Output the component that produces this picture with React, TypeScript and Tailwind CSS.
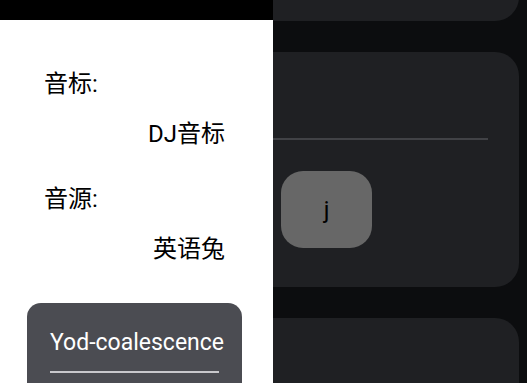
const Row = ({ label, value }: { label: string; value: string }) => {
  return (
    <div className="flex flex-col">
      <div className="h-[32px] leading-[32px]">{label}</div>
      <div className="mt-[18px] h-[32px] text-right leading-[32px]">{value}</div>
    </div>
  );
};

const Drawer = () => {
  return (
    <div className="absolute inset-y-0 left-0 flex w-[273px] flex-col overflow-hidden bg-white">
      <div className="h-[20px] shrink-0 bg-black" />
      <div className="flex shrink-0 flex-col gap-[33px] pt-[48px] pr-[48px] pl-[44px] text-[24px] text-black">
        <Row label="音标:" value="DJ音标" />
        <Row label="音源:" value="英语兔" />
      </div>
      <div className="mt-[38px] ml-[27px] h-[120px] w-[215px] shrink-0 rounded-[14px] bg-[#4b4c52] px-[23px] pt-[24px]">
        <div className="font-['Roboto'] text-[23px] leading-[32px] whitespace-nowrap text-white">Yod-coalescence</div>
        <div className="mt-[12px] h-[1.5px] w-[169px] bg-[#c8c8cc]" />
      </div>
    </div>
  );
};

const Cards = () => {
  return (
    <div className="flex flex-col gap-[31px] pr-[8px] pl-[8px]">
      <div className="-mt-[79px] h-[100px] shrink-0 rounded-[24px] bg-[#1f2023]" />
      <div className="flex h-[235px] shrink-0 flex-col rounded-[24px] bg-[#1f2023]">
        <div className="mt-[86px] mr-[31px] h-[2px] bg-[#414246]" />
        <div className="mt-[31px] ml-[273px] flex h-[77px] w-[91px] items-center justify-center rounded-[22px] bg-[#676767] text-[24px] text-black">
          j
        </div>
      </div>
      <div className="h-[120px] shrink-0 rounded-[24px] bg-[#1f2023]" />
    </div>
  );
};

export default function App() {
  return (
    <div className="relative h-[383px] w-[527px] overflow-hidden bg-[#0c0d0f] font-['Roboto','Noto_Sans_CJK_SC',sans-serif]">
      <Cards />
      <Drawer />
    </div>
  );
}
